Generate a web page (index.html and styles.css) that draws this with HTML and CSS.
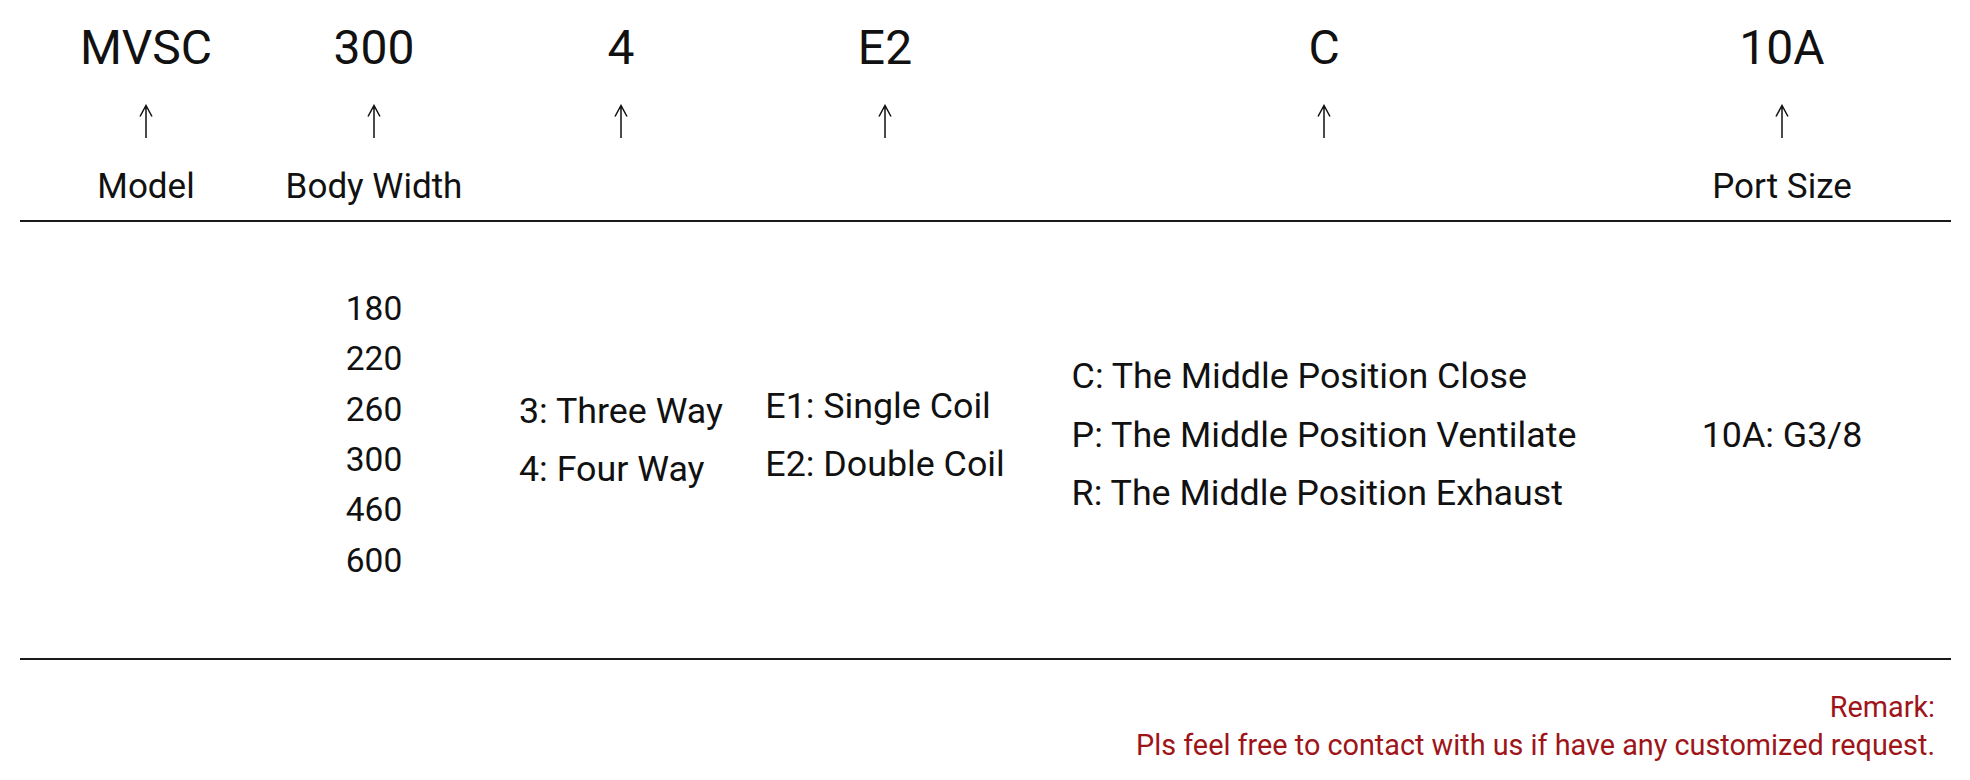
FILE: index.html
```html
<!DOCTYPE html>
<html lang="en">
<head>
<meta charset="utf-8">
<title>MVSC Model Code</title>
<link rel="stylesheet" href="styles.css">
</head>
<body>
<div class="page">
  <div class="head">
    <div class="code">MVSC</div>
    <div class="code">300</div>
    <div class="code">4</div>
    <div class="code">E2</div>
    <div class="code">C</div>
    <div class="code">10A</div>

    <svg class="arrow" viewBox="0 0 16 34"><path d="M8 34V1.5M2 12.5L8 1.5L14 12.5"/></svg>
    <svg class="arrow" viewBox="0 0 16 34"><path d="M8 34V1.5M2 12.5L8 1.5L14 12.5"/></svg>
    <svg class="arrow" viewBox="0 0 16 34"><path d="M8 34V1.5M2 12.5L8 1.5L14 12.5"/></svg>
    <svg class="arrow" viewBox="0 0 16 34"><path d="M8 34V1.5M2 12.5L8 1.5L14 12.5"/></svg>
    <svg class="arrow" viewBox="0 0 16 34"><path d="M8 34V1.5M2 12.5L8 1.5L14 12.5"/></svg>
    <svg class="arrow" viewBox="0 0 16 34"><path d="M8 34V1.5M2 12.5L8 1.5L14 12.5"/></svg>

    <div class="label">Model</div>
    <div class="label">Body Width</div>
    <div class="label"></div>
    <div class="label"></div>
    <div class="label"></div>
    <div class="label">Port Size</div>
  </div>

  <div class="body">
    <div class="col"></div>
    <ul class="list nums">
      <li>180</li><li>220</li><li>260</li><li>300</li><li>460</li><li>600</li>
    </ul>
    <ul class="list ways">
      <li>3: Three Way</li><li>4: Four Way</li>
    </ul>
    <ul class="list">
      <li>E1: Single Coil</li><li>E2: Double Coil</li>
    </ul>
    <ul class="list">
      <li>C: The Middle Position Close</li>
      <li>P: The Middle Position Ventilate</li>
      <li>R: The Middle Position Exhaust</li>
    </ul>
    <ul class="list">
      <li>10A: G3/8</li>
    </ul>
  </div>

  <div class="remark">
    <p>Remark:</p>
    <p>Pls feel free to contact with us if have any customized request.</p>
  </div>
</div>
</body>
</html>
```
FILE: styles.css
```css
html, body {
  margin: 0;
  padding: 0;
  background: #ffffff;
}

.page {
  width: 1970px;
  height: 780px;
  font-family: Roboto, "Liberation Sans", sans-serif;
  color: #111111;
  box-sizing: border-box;
  padding: 24px 20px 0 20px;
  overflow: hidden;
}

.head,
.body {
  display: grid;
  grid-template-columns: 252px 204px 290px 238px 640px 276px;
  justify-items: center;
}

.head {
  grid-template-rows: 48px 66px 66px;
  padding-bottom: 16px;
}

.code {
  font-size: 48px;
  line-height: 48px;
  align-self: start;
}

.arrow {
  width: 16px;
  height: 34px;
  align-self: end;
  fill: none;
  stroke: #111111;
  stroke-width: 1.5;
}

.label {
  font-size: 35px;
  line-height: 35px;
  align-self: end;
  white-space: nowrap;
}

.body {
  width: 1931px;
  height: 436px;
  box-sizing: content-box;
  border-top: 2px solid #1a1a1a;
  border-bottom: 2px solid #1a1a1a;
  align-items: center;
  grid-template-columns: 252px 204px 290px 238px 640px 276px 31px;
}

.list {
  list-style: none;
  margin: 0 0 10px 0;
  padding: 0;
  font-size: 35.8px;
  line-height: 58.5px;
  white-space: nowrap;
}

.list.nums {
  line-height: 50.4px;
  font-size: 33.5px;
}

.list.ways {
  margin: 0;
}

.remark {
  text-align: right;
  padding-right: 15px;
  margin-top: 28px;
  color: #9e1519;
  font-size: 28.8px;
  line-height: 38px;
}

.remark p {
  margin: 0;
}
```
